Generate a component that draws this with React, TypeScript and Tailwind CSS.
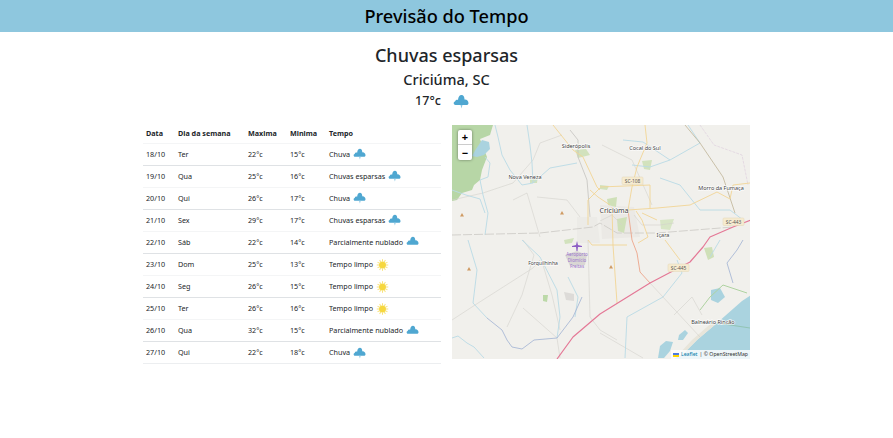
import React from 'react';

type Sky = 'Chuva' | 'Chuvas esparsas' | 'Parcialmente nublado' | 'Tempo limpo';

const FORECAST: { data: string; dia: string; max: number; min: number; tempo: Sky; line: string }[] = [
    { data: '18/10', dia: 'Ter', max: 22, min: 15, tempo: 'Chuva', line: 'border-[#dfe2e5]' },
    { data: '19/10', dia: 'Qua', max: 25, min: 16, tempo: 'Chuvas esparsas', line: 'border-[#f4f5f6]' },
    { data: '20/10', dia: 'Qui', max: 26, min: 17, tempo: 'Chuva', line: 'border-[#dfe2e5]' },
    { data: '21/10', dia: 'Sex', max: 29, min: 17, tempo: 'Chuvas esparsas', line: 'border-[#f4f5f6]' },
    { data: '22/10', dia: 'Sáb', max: 22, min: 14, tempo: 'Parcialmente nublado', line: 'border-[#dfe2e5]' },
    { data: '23/10', dia: 'Dom', max: 25, min: 13, tempo: 'Tempo limpo', line: 'border-[#f4f5f6]' },
    { data: '24/10', dia: 'Seg', max: 26, min: 15, tempo: 'Tempo limpo', line: 'border-[#dfe2e5]' },
    { data: '25/10', dia: 'Ter', max: 26, min: 16, tempo: 'Tempo limpo', line: 'border-[#f4f5f6]' },
    { data: '26/10', dia: 'Qua', max: 32, min: 15, tempo: 'Parcialmente nublado', line: 'border-[#dfe2e5]' },
    { data: '27/10', dia: 'Qui', max: 22, min: 18, tempo: 'Chuva', line: 'border-[#eceef0]' },
];

function SkyIcon({ tempo, className }: { tempo: Sky; className: string }) {
    if (tempo === 'Tempo limpo') {
        return (
            <svg viewBox="0 0 24 24" className={className}>
                <circle cx="12" cy="12" r="7" fill="#f6d73e" />
                {[0, 30, 60, 90, 120, 150, 180, 210, 240, 270, 300, 330].map(a => (
                    <rect key={a} x="11" y="0.500" width="2" height="5" fill="#f8e27a" transform={`rotate(${a} 12 12)`} />
                ))}
            </svg>
        );
    }
    const rain = tempo !== 'Parcialmente nublado';
    return (
        <svg viewBox="0 0 16 15" className={className}>
            <path
                d="M2.500 11 C.5 11 0 8 2 7.500 C2.500 5.500 4.500 5.500 5 6 C5.500 2 7 1 8.500 1 C10.500 1 11.500 3 11.500 5.500 C13.500 5 15.500 7 15.500 9 C15.500 10.500 14.500 11 13.500 11 Z"
                fill="#4fa7d1"
            />
            {rain && <path d="M7.500 11 L9.500 11 L8.500 14.500 Z" fill="#8cc8e4" />}
        </svg>
    );
}

const RIVERS = [
    'M33 32 L38 38 L36 52 L28 55 L31 70 L36 88 L33 110',
    'M16 115 L25 145 L21 178 L35 193',
    'M70 115 L88 132 L105 165 L108 192 L105 213',
    'M116 152 L126 172 L123 192',
    'M0 213 L6 211 L15 218 L22 222 L32 233',
    'M43 0 L46 12 L50 30 L58 45 L70 60 L81 58 L98 43 L125 38',
    'M75 0 L78 20 L80 38 L81 58',
    'M171 15 L191 17 L218 35 L198 42 L180 40',
    'M218 35 L248 18 L236 0',
    'M208 53 L228 60 L248 85 L278 85 L291 95',
    'M173 233 L175 192 L211 172 L230 148 L225 135',
    'M268 115 L258 132',
    'M0 65 L14 70 L28 74 L33 88',
];

const BLUE_RIVERS = [
    'M35 193 L50 205 L55 215 L60 222 L70 224 L82 215 L105 213 L121 192 L130 172',
    'M291 115 L285 125 L275 138 L281 158',
];

const MINOR_ROADS = [
    'M0 195 L23 180 L81 143 L88 135',
    'M71 183 L105 213 L108 233',
    'M91 140 L100 170 L108 205',
    'M136 115 L138 192 L148 205 L165 215',
    'M0 75 L31 68 L61 58 L81 35 L88 18 L110 10',
    'M61 75 L75 68 L88 112',
    'M85 72 L115 75 L128 92',
    'M148 208 L191 233',
    'M198 158 L248 212',
    'M71 115 L82 130 L70 170 L55 202',
    'M222 190 L240 172 L250 190',
    'M150 20 L180 35 L200 80',
    'M182 90 L190 100 L208 100 L222 98',
    'M148 96 L160 90 L170 100',
];

const ORANGE_ROADS = [
    'M193 0 L195 18 L185 42 L180 62 L176 85',
    'M148 62 L198 60 L198 83',
    'M176 85 L205 83 L238 80 L265 67 L278 74 L281 60 L298 58',
    'M101 0 L121 25 L131 32 L145 62 L148 65',
    'M148 63 L136 75 L136 100',
    'M160 82 L161 120 L165 178',
    'M176 85 L148 88',
    'M213 115 L228 135',
    'M136 115 L140 120 L175 120',
    'M184 86 L190 95 L196 112 L186 118',
    'M138 65 L146 72 L158 80',
    'M190 88 L205 95',
];

const LABELS = [
    { x: 124, y: 23, t: 'Siderópolis', s: 5.5 },
    { x: 73, y: 54, t: 'Nova Veneza', s: 5.5 },
    { x: 193, y: 25, t: 'Cocal do Sul', s: 5.5 },
    { x: 269, y: 65, t: 'Morro da Fumaça', s: 5.5 },
    { x: 162, y: 88, t: 'Criciúma', s: 7 },
    { x: 211, y: 112, t: 'Içara', s: 5.5 },
    { x: 91, y: 140, t: 'Forquilhinha', s: 5 },
    { x: 261, y: 199, t: 'Balneário Rincão', s: 5.5 },
];

const SHIELDS = [
    { x: 170, y: 52, t: 'SC-108' },
    { x: 271, y: 93, t: 'SC-443' },
    { x: 216, y: 139, t: 'SC-445' },
];

function MapArt() {
    return (
        <svg viewBox="0 0 298 234" className="block h-full w-full">
            <rect width="298" height="234" fill="#f1f0ec" />
            <path d="M0 0 L41 0 L38 10 L28 14 L35 32 L30 45 L28 55 L22 60 L20 65 L10 68 L5 75 L0 76 Z" fill="#b7d6a6" />
            <path d="M30 15 L37 17 L38 24 L32 30 L25 32 L20 31 L24 24 Z" fill="#aad3df" />
            {/* town areas */}
            <path d="M148 80 L182 82 L188 112 L150 114 Z" fill="#ebe9e5" />
            <path d="M125 92 L145 92 L148 118 L125 118 Z" fill="#ecebe7" />
            <path d="M113 130 L125 126 L135 130 L133 140 L118 141 Z" fill="#d9d7d4" />
            <path d="M112 167 L122 169 L122 176 L114 175 Z" fill="#dddbd8" />
            {/* greens */}
            <path d="M78 52 L86 50 L85 58 L78 58 Z" fill="#d2e2bd" />
            <path d="M123 25 L134 24 L138 30 L126 33 Z" fill="#d2e2bd" />
            <path d="M190 36 L200 35 L198 45 L192 44 Z" fill="#d2e2bd" />
            <path d="M148 60 L157 61 L155 65 L148 64 Z" fill="#d2e2bd" />
            <path d="M155 74 L165 72 L164 82 L156 80 Z" fill="#cfe0b8" />
            <path d="M165 94 L175 92 L172 108 L166 106 Z" fill="#cfe0b8" />
            <path d="M208 95 L222 94 L218 105 L209 104 Z" fill="#d8e6c6" />
            <path d="M112 115 L122 113 L120 118 L113 119 Z" fill="#d2e2bd" />
            <path d="M91 170 L96 170 L95 177 L91 176 Z" fill="#bcd9a8" />
            <path d="M252 123 L260 122 L262 132 L256 135 Z" fill="#cfe0b8" />
            {/* water */}
            <path d="M299 170 L290 176 L265 198 L245 215 L232 228 L222 234 L299 234 Z" fill="#aad3df" />
            <path d="M259 165 L268 163 L273 172 L266 178 L259 175 Z" fill="#aad3df" />
            <path d="M208 221 L214 216 L221 217 L218 226 L212 233 L206 233 Z" fill="#aad3df" />
            <path d="M227 210 L233 205 L236 208 L231 215 L226 215 Z" fill="#aad3df" />
            <path d="M232 228 L245 215 L265 198 L262 196 L240 215 L228 228 Z" fill="#e8e5da" />
            <g fill="none" strokeLinejoin="round">
                {MINOR_ROADS.map(d => <path key={d} d={d} stroke="#d3d1cc" strokeWidth="0.6" />)}
                {RIVERS.map(d => <path key={d} d={d} stroke="#b9dae5" strokeWidth="0.9" />)}
                {BLUE_RIVERS.map(d => <path key={d} d={d} stroke="#a9b9d6" strokeWidth="0.9" />)}
                <path d="M0 110 L88 108 L141 102 L148 98 L165 108 L205 108 L281 102" stroke="#cfcdc8" strokeWidth="0.9" strokeDasharray="9 2" />
                <path d="M118 5 L126 15 L126 32 L135 55 L138 92" stroke="#c4c3bf" strokeWidth="0.8" />
                <path d="M233 0 L248 18 L271 52 L283 88" stroke="#bfb497" strokeWidth="0.8" />
                <path d="M248 0 L262 20 L290 30 L296 60" stroke="#dccbdb" strokeWidth="0.6" strokeDasharray="3 1" />
                {ORANGE_ROADS.map(d => <path key={d} d={d} stroke="#f2d595" strokeWidth="0.9" />)}
                <path d="M176 85 L180 115 L185 128 L188 147 L198 158" stroke="#ecA58a" strokeWidth="0.9" />
                <path d="M248 185 L258 172 L271 160 L295 168" stroke="#afd3a1" strokeWidth="1" />
                <path d="M265 198 L298 203" stroke="#8cc0a8" strokeWidth="0.8" />
                <path d="M105 234 L121 212 L148 189 L198 158 L238 137 L251 122 L258 112 L281 102 L299 95" stroke="#e47896" strokeWidth="1.2" />
            </g>
            <g fill="#cf9a62">
                <path d="M10 88 L12 91.500 L8 91.500 Z" />
                <path d="M110 86 L112 89.500 L108 89.500 Z" />
                <path d="M17 142 L19 145.500 L15 145.500 Z" />
                <path d="M159 140 L161 143.500 L157 143.500 Z" />
            </g>
            {/* airport */}
            <path d="M125 116 L126 120 L130 121 L130 122 L126 122 L125.500 126 L124.500 126 L124 122 L120 122 L120 121 L124 120 Z" fill="#8d5fc4" />
            <g fill="#9a75cc" fontSize="4.500" textAnchor="middle" fontFamily="'Noto Sans', sans-serif">
                <text x="125" y="131">Aeroporto</text>
                <text x="125" y="137">Diomício</text>
                <text x="125" y="143">Freitas</text>
            </g>
            {SHIELDS.map(s => (
                <g key={s.t}>
                    <rect x={s.x} y={s.y} width="21" height="7.500" rx="1" fill="#f6ebd0" stroke="#e3d6b4" strokeWidth="0.5" />
                    <text x={s.x + 10.500} y={s.y + 5.600} fontSize="4.800" textAnchor="middle" fill="#555" fontFamily="'Noto Sans', sans-serif">{s.t}</text>
                </g>
            ))}
            {LABELS.map(l => (
                <text
                    key={l.t}
                    x={l.x}
                    y={l.y}
                    fontSize={l.s}
                    textAnchor="middle"
                    fill="#3d3d3d"
                    stroke="#ffffff"
                    strokeWidth="1.2"
                    paintOrder="stroke"
                    fontFamily="'Noto Sans', sans-serif"
                >
                    {l.t}
                </text>
            ))}
        </svg>
    );
}

export default function App() {
    return (
        <div className="min-h-[438px] bg-white text-[#212529] font-['Noto_Sans',sans-serif]">
            <header className="h-8 bg-[#8ec7de] text-center text-[18.200px] font-medium leading-8 text-black">
                Previsão do Tempo
            </header>

            <div className="flex flex-col items-center pt-[10px]">
                <h1 className="text-[18px] font-medium leading-[26px]">Chuvas esparsas</h1>
                <h2 className="mt-[1px] text-[14.500px] font-medium leading-[20px]">Criciúma, SC</h2>
                <div className="mt-[2px] flex items-center gap-3 pr-[9px] text-[12.500px] font-medium leading-[20px]">
                    <span>17°c</span>
                    <SkyIcon tempo="Chuvas esparsas" className="h-[15px] w-[16px]" />
                </div>
            </div>

            <div className="ml-[143px] mt-[14px] flex w-[607px] items-start gap-[11px]">
                <table className="w-[298px] table-fixed border-collapse text-left text-[7.200px]">
                    <colgroup>
                        <col className="w-[32px]" />
                        <col className="w-[70px]" />
                        <col className="w-[42px]" />
                        <col className="w-[39px]" />
                        <col className="w-[115px]" />
                    </colgroup>
                    <thead>
                        <tr className="h-[18px] border-b border-[#f4f5f6] font-bold">
                            <th className="pl-[3px]">Data</th>
                            <th className="pl-[3px]">Dia da semana</th>
                            <th className="pl-[3px]">Maxima</th>
                            <th className="pl-[3px]">Minima</th>
                            <th className="pl-[3px]">Tempo</th>
                        </tr>
                    </thead>
                    <tbody>
                        {FORECAST.map(f => (
                            <tr key={f.data} className={`h-[22.100px] border-b ${f.line}`}>
                                <td className="pl-[3px]">{f.data}</td>
                                <td className="pl-[3px]">{f.dia}</td>
                                <td className="pl-[3px]">{f.max}°c</td>
                                <td className="pl-[3px]">{f.min}°c</td>
                                <td className="pl-[3px]">
                                    <span className="flex items-center gap-[3px]">
                                        {f.tempo}
                                        <SkyIcon tempo={f.tempo} className="h-[12px] w-[13px]" />
                                    </span>
                                </td>
                            </tr>
                        ))}
                    </tbody>
                </table>

                <div className="relative h-[234px] w-[298px]">
                    <MapArt />
                    <div className="absolute left-[6px] top-[5px] w-[14px] overflow-hidden rounded-[2px] bg-white text-center text-[11px] font-bold text-black shadow-[0_0_3px_rgba(0,0,0,0.45)]">
                        <div className="h-[15px] border-b border-[#cccccc] leading-[14px]">+</div>
                        <div className="h-[15px] leading-[15px]">−</div>
                    </div>
                    <div className="absolute bottom-0 right-0 flex h-[9px] items-center gap-[2px] bg-white/80 px-[2px] text-[5.200px] leading-[9px] text-[#333333]">
                        <svg viewBox="0 0 12 8" className="h-[4px] w-[6px]">
                            <rect width="12" height="4" fill="#4c7be1" />
                            <rect y="4" width="12" height="4" fill="#ffd500" />
                        </svg>
                        <span className="text-[#0078a8]">Leaflet</span>
                        <span>| © OpenStreetMap</span>
                    </div>
                </div>
            </div>
        </div>
    );
}
